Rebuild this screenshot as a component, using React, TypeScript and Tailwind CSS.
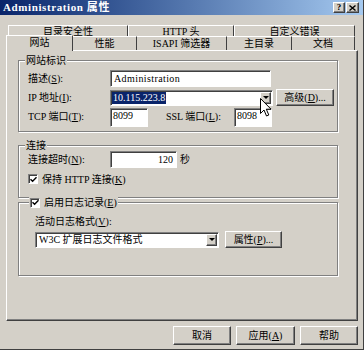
import React from 'react';

const raised =
  'border border-t-white border-l-white border-r-[#404040] border-b-[#404040] shadow-[inset_-1px_-1px_0_#808080] bg-[#d4d0c8]';
const sunken =
  'border border-t-[#808080] border-l-[#808080] border-r-white border-b-white shadow-[inset_1px_1px_0_#404040] bg-white';
const group =
  'relative border border-[#808080] shadow-[inset_1px_1px_0_#fff,1px_1px_0_#fff]';

function U({ children }: { children: React.ReactNode }) {
  return <span className="underline">{children}</span>;
}

function Check() {
  return (
    <span className={`${sunken} w-[10px] h-[10px] flex items-center justify-center shrink-0`}>
      <svg width="7" height="7" viewBox="0 0 7 7">
        <path d="M0.5 3.2 L2.6 5.3 L6.5 1.2" stroke="#000" strokeWidth="1.4" fill="none" />
      </svg>
    </span>
  );
}

function DropButton() {
  return (
    <span className={`${raised} w-[11px] h-full flex items-center justify-center shrink-0`}>
      <svg width="6" height="3" viewBox="0 0 6 3">
        <path d="M0 0 H6 L3 3 Z" fill="#000" />
      </svg>
    </span>
  );
}

function Legend({ children }: { children: React.ReactNode }) {
  return (
    <div className="absolute left-[6px] top-[-7px] px-[1px] bg-[#d4d0c8] h-[13px] flex items-center gap-[4px] leading-[13px]">
      {children}
    </div>
  );
}

export default function App() {
  const backTabs = [
    { label: '目录安全性', w: 'w-[120px]' },
    { label: 'HTTP 头', w: 'w-[106px]' },
    { label: '自定义错误', w: 'w-[121px]' },
  ];
  const frontTabs = [
    { label: '性能', w: 'w-[64px]' },
    { label: 'ISAPI 筛选器', w: 'w-[90px]' },
    { label: '主目录', w: 'w-[65px]' },
    { label: '文档', w: 'w-[63px]' },
  ];

  return (
    <div className="w-[364px] h-[350px] bg-[#d4d0c8] border-r border-b border-[#404040] text-[10px] text-black [font-family:'Liberation_Serif','Noto_Sans_CJK_SC',serif] overflow-hidden">
      {/* title bar */}
      <div className="h-[15px] bg-gradient-to-r from-[#0a246a] to-[#a6caf0] flex items-center pl-[3px] pr-[4px]">
        <span className="text-white font-bold text-[11px] leading-[15px] tracking-[0.6px]">Administration 属性</span>
        <div className="ml-auto flex gap-[1px]">
          <span className={`${raised} w-[12px] h-[11px] flex items-center justify-center text-[9px] font-bold leading-none`}>?</span>
          <span className={`${raised} w-[13px] h-[11px] flex items-center justify-center`}>
            <svg width="7" height="6" viewBox="0 0 7 6">
              <path d="M0.5 0.5 L6.5 5.5 M6.5 0.5 L0.5 5.5" stroke="#000" strokeWidth="1.4" />
            </svg>
          </span>
        </div>
      </div>

      {/* tabs */}
      <div className="pt-[10px]">
        <div className="flex pl-[8px] h-[11px]">
          {backTabs.map((t) => (
            <div
              key={t.label}
              className={`${t.w} h-[11px] border-t border-l border-t-white border-l-white border-r border-r-[#404040] flex items-center justify-center leading-[11px]`}
            >
              {t.label}
            </div>
          ))}
        </div>
        <div className="flex pl-[6px] h-[14px] items-end">
          <div className="relative z-10 w-[67px] h-[16px] -mb-px bg-[#d4d0c8] border-t border-l border-t-white border-l-white border-r border-r-[#404040] flex items-start justify-center pt-[1px] leading-[12px]">
            网站
          </div>
          {frontTabs.map((t) => (
            <div
              key={t.label}
              className={`${t.w} h-[14px] border-t border-t-white border-r border-r-[#404040] flex items-center justify-center leading-[13px]`}
            >
              {t.label}
            </div>
          ))}
        </div>

        {/* panel */}
        <div className="ml-[6px] w-[352px] h-[271px] border border-t-white border-l-white border-r-[#404040] border-b-[#404040] shadow-[inset_-1px_-1px_0_#808080] pl-[11px]">
          {/* 网站标识 */}
          <div className={`${group} mt-[9px] w-[320px] h-[72px] pl-[9px] pt-[9px] flex flex-col gap-[2px]`}>
            <Legend>网站标识</Legend>
            <div className="flex items-center h-[17px]">
              <span className="w-[82px]">
                描述(<U>S</U>):
              </span>
              <div className={`${sunken} w-[161px] h-[17px] flex items-center pl-[3px] leading-none tracking-[0.4px]`}>Administration</div>
            </div>
            <div className="flex items-center h-[17px]">
              <span className="w-[82px]">
                IP 地址(<U>I</U>):
              </span>
              <div className={`${sunken} relative w-[163px] h-[16px] flex items-center p-[1px]`}>
                <span className="bg-[#0a246a] text-white px-[1px] leading-[12px]">10.115.223.8</span>
                <span className="ml-auto h-full flex">
                  <DropButton />
                </span>
                <svg className="absolute left-[149px] top-[7px] z-20" width="12" height="19" viewBox="0 0 12 19">
                  <path
                    d="M0.5 0.5 V15.5 L4 12 L6.5 18 L8.8 17 L6.3 11.2 H11 Z"
                    fill="#fff"
                    stroke="#000"
                    strokeWidth="1"
                    strokeLinejoin="round"
                  />
                </svg>
              </div>
              <div className={`${raised} ml-[3px] w-[58px] h-[17px] flex items-center justify-center leading-none`}>
                高级(<U>D</U>)...
              </div>
            </div>
            <div className="flex items-center h-[17px]">
              <span className="w-[82px]">
                TCP 端口(<U>T</U>):
              </span>
              <div className={`${sunken} w-[38px] h-[19px] mt-[2px] flex items-start pt-[1px] pl-[2px] leading-[12px]`}>8099</div>
              <span className="ml-[18px] w-[68px]">
                SSL 端口(<U>L</U>):
              </span>
              <div className={`${sunken} w-[38px] h-[19px] mt-[2px] flex items-start pt-[1px] pl-[2px] leading-[12px]`}>8098</div>
            </div>
          </div>

          {/* 连接 */}
          <div className={`${group} mt-[13px] w-[320px] h-[53px] pl-[9px] pt-[5px]`}>
            <Legend>连接</Legend>
            <div className="flex items-center h-[17px]">
              <span className="w-[82px]">
                连接超时(<U>N</U>):
              </span>
              <div className={`${sunken} w-[67px] h-[17px] flex items-center justify-end pr-[3px] leading-none`}>120</div>
              <span className="ml-[3px]">秒</span>
            </div>
            <div className="flex items-center gap-[4px] mt-[5px] h-[12px]">
              <Check />
              <span>
                保持 HTTP 连接(<U>K</U>)
              </span>
            </div>
          </div>

          {/* 启用日志记录 */}
          <div className={`${group} mt-[4px] w-[320px] h-[74px] pl-[16px] pt-[12px]`}>
            <div className="absolute left-[10px] top-[-7px] px-[1px] bg-[#d4d0c8] h-[13px] flex items-center gap-[4px]">
              <Check />
              <span>
                启用日志记录(<U>E</U>)
              </span>
            </div>
            <div className="h-[13px] leading-[13px]">
              活动日志格式(<U>V</U>):
            </div>
            <div className="flex items-center mt-[3px]">
              <div className={`${sunken} w-[184px] h-[16px] flex items-center p-[1px]`}>
                <span className="pl-[2px] leading-[12px]">W3C 扩展日志文件格式</span>
                <span className="ml-auto h-full flex">
                  <DropButton />
                </span>
              </div>
              <div className={`${raised} ml-[6px] w-[57px] h-[17px] flex items-center justify-center leading-none`}>
                属性(<U>P</U>)...
              </div>
            </div>
          </div>
        </div>

        {/* dialog buttons */}
        <div className="flex justify-end gap-[5px] pr-[5px] mt-[5px]">
          <div className={`${raised} w-[58px] h-[19px] flex items-center justify-center`}>取消</div>
          <div className={`${raised} w-[59px] h-[19px] flex items-center justify-center`}>
            应用(<U>A</U>)
          </div>
          <div className={`${raised} w-[58px] h-[19px] flex items-center justify-center`}>帮助</div>
        </div>
      </div>
    </div>
  );
}
